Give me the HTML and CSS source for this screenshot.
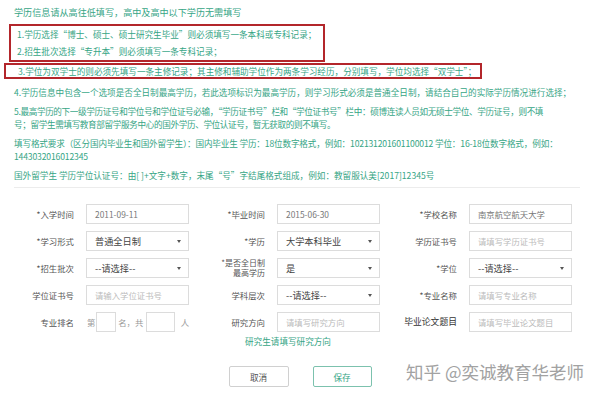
FILE: index.html
```html
<!DOCTYPE html>
<html lang="zh-CN">
<head>
  <meta charset="UTF-8" />
  <meta name="viewport" content="width=device-width, initial-scale=1.0"/>
  <title>学历信息</title>
  <link rel="stylesheet" href="styles.css">
</head>
<body>
  <div class="notes">
    <p class="lead">学历信息请从高往低填写，高中及高中以下学历无需填写</p>
    <div class="mark mark-one">
      <p>1.学历选择“博士、硕士、硕士研究生毕业”则必须填写一条本科或专科记录；</p>
      <p>2.招生批次选择“专升本”则必须填写一条专科记录；</p>
    </div>
    <div class="mark mark-two">
      <p>3.学位为双学士的则必须先填写一条主修记录；其主修和辅助学位作为两条学习经历，分别填写，学位均选择“双学士”；</p>
    </div>
    <p class="after-mark">4.学历信息中包含一个选项是否全日制最高学历，若此选项标识为最高学历，则学习形式必须是普通全日制，请结合自己的实际学历情况进行选择；</p>
    <p class="tight">5.最高学历的下一级学历证号和学位号和学位证号必输，“学历证书号”栏和“学位证书号”栏中：硕博连读人员如无硕士学位、学历证号，则不填<br>号；留学生需填写教育部留学服务中心的国外学历、学位认证号，暂无获取的则不填写。</p>
    <p class="snug">填写格式要求（区分国内毕业生和国外留学生）：国内毕业生 学历：18位数字格式，例如：102131201601100012 学位：16-18位数字格式，例如：<br>1443032016012345</p>
    <p>国外留学生 学历学位认证号：由[ ]+文字+数字，末尾“号”字结尾格式组成，例如：教留服认美[2017]12345号</p>
  </div>

  <div class="edu-form">
    <label>*入学时间</label>
    <div class="field value">2011-09-11</div>
    <label>*毕业时间</label>
    <div class="field value">2015-06-30</div>
    <label>*学校名称</label>
    <div class="field value">南京航空航天大学</div>

    <label>*学习形式</label>
    <div class="field select">普通全日制<span class="caret"></span></div>
    <label>*学历</label>
    <div class="field select">大学本科毕业<span class="caret"></span></div>
    <label>学历证书号</label>
    <div class="field hint">请填写学历证书号</div>

    <label>*招生批次</label>
    <div class="field select">--请选择--<span class="caret"></span></div>
    <label class="two-line">*是否全日制<br>最高学历</label>
    <div class="field select">是<span class="caret"></span></div>
    <label>*学位</label>
    <div class="field select">--请选择--<span class="caret"></span></div>

    <label>学位证书号</label>
    <div class="field hint">请输入学位证书号</div>
    <label>学科层次</label>
    <div class="field select">--请选择--<span class="caret"></span></div>
    <label>*专业名称</label>
    <div class="field hint">请填写专业名称</div>

    <label>专业排名</label>
    <div class="rank">
      <span>第</span><span class="box small"></span><span>名，共</span><span class="box wide"></span><span>人</span>
    </div>
    <label>研究方向</label>
    <div class="field hint">请填写研究方向</div>
    <label class="strong">毕业论文题目</label>
    <div class="field hint">请填写毕业论文题目</div>
  </div>

  <div class="form-tip">研究生请填写研究方向</div>

  <div class="buttons">
    <button class="btn">取消</button>
    <button class="btn save">保存</button>
  </div>

  <div class="watermark">知乎 @奕诚教育华老师</div>
</body>
</html>
```

FILE: styles.css
```css
body {
  font-family: "Noto Sans CJK SC", "Noto Sans", sans-serif;
  background: #fff;
  color: #555;
  margin: 0;
  padding: 5px 0 0 0;
  position: relative;
  height: 390px;
  overflow: hidden;
}
.notes {
  padding-left: 14px;
  color: #36a585;
  font-size: 8.6px;
  line-height: 13px;
  white-space: nowrap;
}
.notes p {
  margin: 6px 0 0 0;
}
.notes .lead {
  margin: 0;
  font-size: 9.1px;
  line-height: 14px;
}
.notes .after-mark {
  margin-top: 7px;
}
.notes .tight {
  letter-spacing: -0.36px;
}
.notes .snug {
  letter-spacing: -0.15px;
}
.mark {
  border: 2px solid #b3262b;
  width: fit-content;
}
.mark-one {
  margin: 5px 0 0 -5px;
  padding: 0 7px 0 6px;
}
.mark-one p {
  margin: 0;
  line-height: 17px;
}
.mark-two {
  margin: 1px 0 0 -10px;
  padding: 0 4px 0 12px;
}
.mark-two p {
  margin: 0;
  line-height: 12px;
}
.notes::after {
  content: "";
  display: block;
  height: 1px;
  background: #ececec;
  margin: 5px 20px 0 0;
}
.edu-form {
  display: grid;
  grid-template-columns: 66px 103px 64px 103px 65px 103px;
  grid-auto-rows: 20px;
  column-gap: 12px;
  row-gap: 7px;
  padding-left: 8px;
  margin-top: 16px;
}
.edu-form label {
  display: flex;
  align-items: center;
  justify-content: flex-end;
  text-align: right;
  font-size: 8.4px;
  line-height: 10px;
  color: #555;
  white-space: nowrap;
}
.edu-form label.two-line {
  font-size: 8px;
  line-height: 10px;
}
.edu-form label.strong {
  color: #333;
  font-size: 8.8px;
}
.field {
  box-sizing: border-box;
  height: 20px;
  border: 1px solid #dcdcdc;
  padding: 0 8px;
  display: flex;
  align-items: center;
  font-size: 8.4px;
  color: #777;
  white-space: nowrap;
}
.field.hint {
  color: #bbb;
}
.field.select {
  font-size: 9.2px;
  color: #444;
  justify-content: space-between;
  padding-right: 7px;
}
.caret {
  width: 0;
  height: 0;
  border-left: 2.5px solid transparent;
  border-right: 2.5px solid transparent;
  border-top: 3px solid #555;
}
.rank {
  display: flex;
  align-items: center;
  font-size: 8.4px;
  color: #999;
  white-space: nowrap;
}
.rank span {
  margin-left: 1px;
}
.box {
  box-sizing: border-box;
  height: 20px;
  border: 1px solid #dcdcdc;
}
.box.small {
  width: 21px;
  margin-right: 1px;
}
.box.wide {
  width: 30px;
  margin: 0 5px 0 3px;
}
.form-tip {
  margin: 3px 0 0 245px;
  font-size: 8.6px;
  line-height: 12px;
  color: #36a585;
}
.buttons {
  display: flex;
  justify-content: center;
  gap: 24px;
  margin-top: 19px;
}
.btn {
  font-family: inherit;
  width: 60px;
  height: 21px;
  padding: 0;
  background: #fff;
  border: 1px solid #d0d0d0;
  border-radius: 2px;
  font-size: 8.6px;
  color: #555;
}
.btn.save {
  width: 59px;
  border-color: #7cc2ae;
  color: #36a585;
}
.watermark {
  position: absolute;
  left: 406px;
  top: 360px;
  font-size: 17.5px;
  line-height: 24px;
  color: #a2a2a2;
  text-shadow: 0 0 2px #fff;
  white-space: nowrap;
}
```
